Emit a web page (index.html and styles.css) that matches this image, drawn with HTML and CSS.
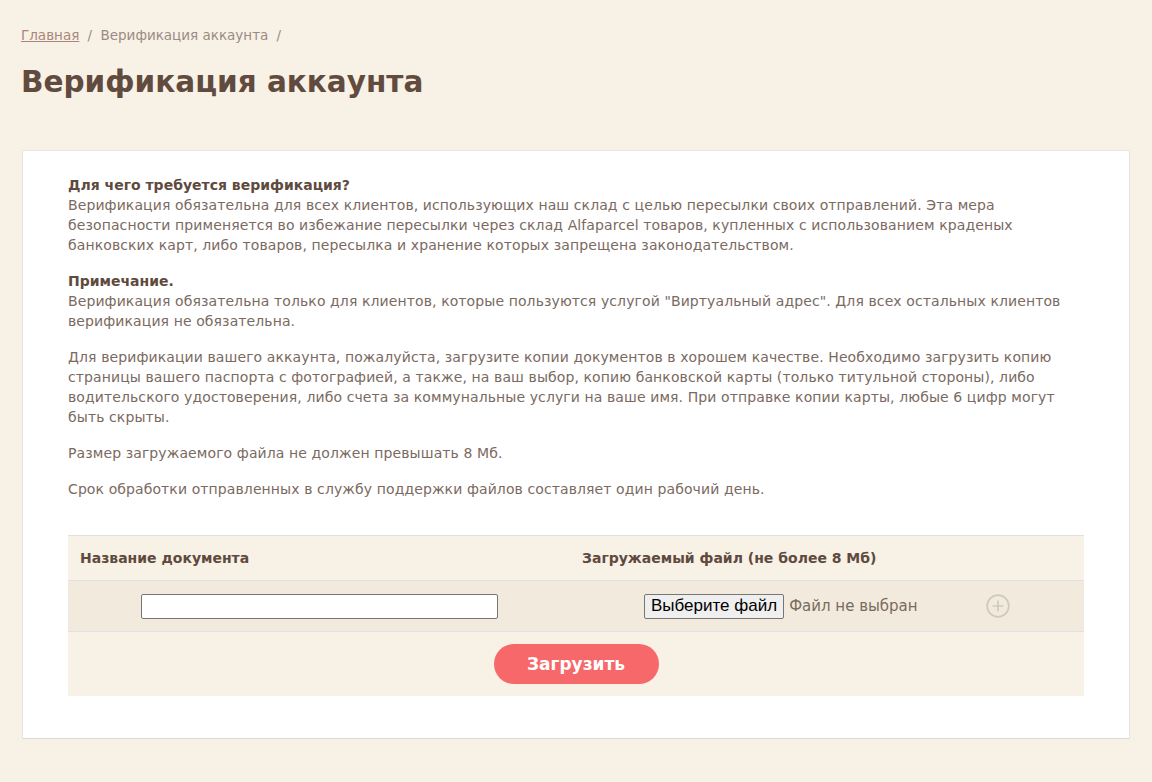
FILE: index.html
```html
<!DOCTYPE html>
<html lang="ru">
   <head>
      <meta charset="UTF-8">
      <meta name="viewport" content="width=device-width, initial-scale=1.0">
      <title>Верификация аккаунта</title>
      <link rel="stylesheet" href="styles.css">
   </head>
   <body>
      <nav class="breadcrumbs">
         <a href="#">Главная</a>
         <span class="sep">/</span>
         <span>Верификация аккаунта</span>
         <span class="sep">/</span>
      </nav>
      <h1 class="page-title">Верификация аккаунта</h1>
      <div class="card">
         <div class="info">
            <p><b>Для чего требуется верификация?</b><br>
            Верификация обязательна для всех клиентов, использующих наш склад с целью пересылки своих отправлений. Эта мера безопасности применяется во избежание пересылки через склад Alfaparcel товаров, купленных с использованием краденых банковских карт, либо товаров, пересылка и хранение которых запрещена законодательством.</p>
            <p><b>Примечание.</b><br>
            Верификация обязательна только для клиентов, которые пользуются услугой "Виртуальный адрес". Для всех остальных клиентов верификация не обязательна.</p>
            <p>Для верификации вашего аккаунта, пожалуйста, загрузите копии документов в хорошем качестве. Необходимо загрузить копию страницы вашего паспорта с фотографией, а также, на ваш выбор, копию банковской карты (только титульной стороны), либо водительского удостоверения, либо счета за коммунальные услуги на ваше имя. При отправке копии карты, любые 6 цифр могут быть скрыты.</p>
            <p>Размер загружаемого файла не должен превышать 8 Мб.</p>
            <p>Срок обработки отправленных в службу поддержки файлов составляет один рабочий день.</p>
         </div>
         <form class="upload">
            <div class="upload-row upload-head">
               <div class="col-name">Название документа</div>
               <div class="col-file">Загружаемый файл (не более 8 Мб)</div>
               <div class="col-add"></div>
            </div>
            <div class="upload-row upload-item">
               <div class="col-name"><input type="text" class="doc-name"></div>
               <div class="col-file">
                  <label class="file-btn">Выберите файл</label>
                  <span class="file-state">Файл не выбран</span>
               </div>
               <div class="col-add">
                  <svg width="24" height="24" viewBox="0 0 24 24" fill="none" stroke="#d0c9c0" stroke-width="1.7">
                     <circle cx="12" cy="12" r="10.8"/>
                     <path d="M12 6.5v11M6.5 12h11"/>
                  </svg>
               </div>
            </div>
            <div class="upload-foot">
               <button type="submit" class="btn-submit">Загрузить</button>
            </div>
         </form>
      </div>
   </body>
</html>
```

FILE: styles.css
```css
body {
font-family: "DejaVu Sans", "Open Sans", sans-serif;
margin: 0;
padding: 20px 22px 43px 21px;
background-color: #f8f1e6;
color: #7a6a61;
font-size: 14px;
}
.breadcrumbs {
font-size: 13.5px;
line-height: 20px;
color: #9a8c83;
padding-top: 5px;
}
.breadcrumbs a {
color: #a8877a;
text-decoration: underline;
}
.breadcrumbs .sep {
margin: 0 4px;
}
.page-title {
margin: 17px 0 0;
font-size: 29.5px;
line-height: 40px;
font-weight: 600;
color: #614b3f;
}
.card {
margin: 48px 0 0 1px;
background: #fff;
border: 1px solid #e8e4df;
border-bottom-color: #dcd8d3;
padding: 24px 45px 42px 45px;
}
.info {
letter-spacing: 0.1px;
}
.info p {
margin: 0 0 16px;
line-height: 20px;
}
.info b {
color: #5e4a3e;
font-weight: 700;
letter-spacing: 0;
}
.upload {
margin-top: 36px;
}
.upload-row {
display: grid;
grid-template-columns: 502px 342px 1fr;
align-items: center;
}
.upload-head {
background: #f8f1e6;
border-top: 1px solid #e2e0dd;
height: 44px;
font-weight: 700;
color: #5e4a3e;
}
.upload-head .col-name {
padding-left: 12px;
}
.upload-head .col-file {
padding-left: 12px;
}
.upload-item {
background: #f2eadc;
border-top: 1px solid #dfe0e0;
border-bottom: 1px solid #dfe0e0;
height: 50px;
}
.upload-item .col-name {
text-align: center;
}
.doc-name {
width: 357px;
height: 25px;
box-sizing: border-box;
border: 1px solid #767676;
border-radius: 2px;
background: #fff;
}
.upload-item .col-file {
padding-left: 74px;
display: flex;
align-items: center;
white-space: nowrap;
}
.file-btn {
flex-shrink: 0;
font-family: "Liberation Sans", Arial, sans-serif;
font-size: 17px;
color: #000;
background: #efefef;
border: 1px solid #767676;
border-radius: 2px;
padding: 2px 6px 3px;
line-height: 18px;
}
.file-state {
flex-shrink: 0;
margin-left: 5px;
font-size: 15px;
}
.col-add {
text-align: center;
}
.col-add svg {
display: block;
margin: 0 auto;
}
.upload-foot {
background: #f8f1e6;
height: 64px;
display: flex;
justify-content: center;
align-items: center;
}
.btn-submit {
width: 165px;
height: 40px;
border: none;
border-radius: 20px;
background: #f7686a;
color: #fff;
font-family: inherit;
font-size: 17px;
font-weight: 700;
cursor: pointer;
}
```
